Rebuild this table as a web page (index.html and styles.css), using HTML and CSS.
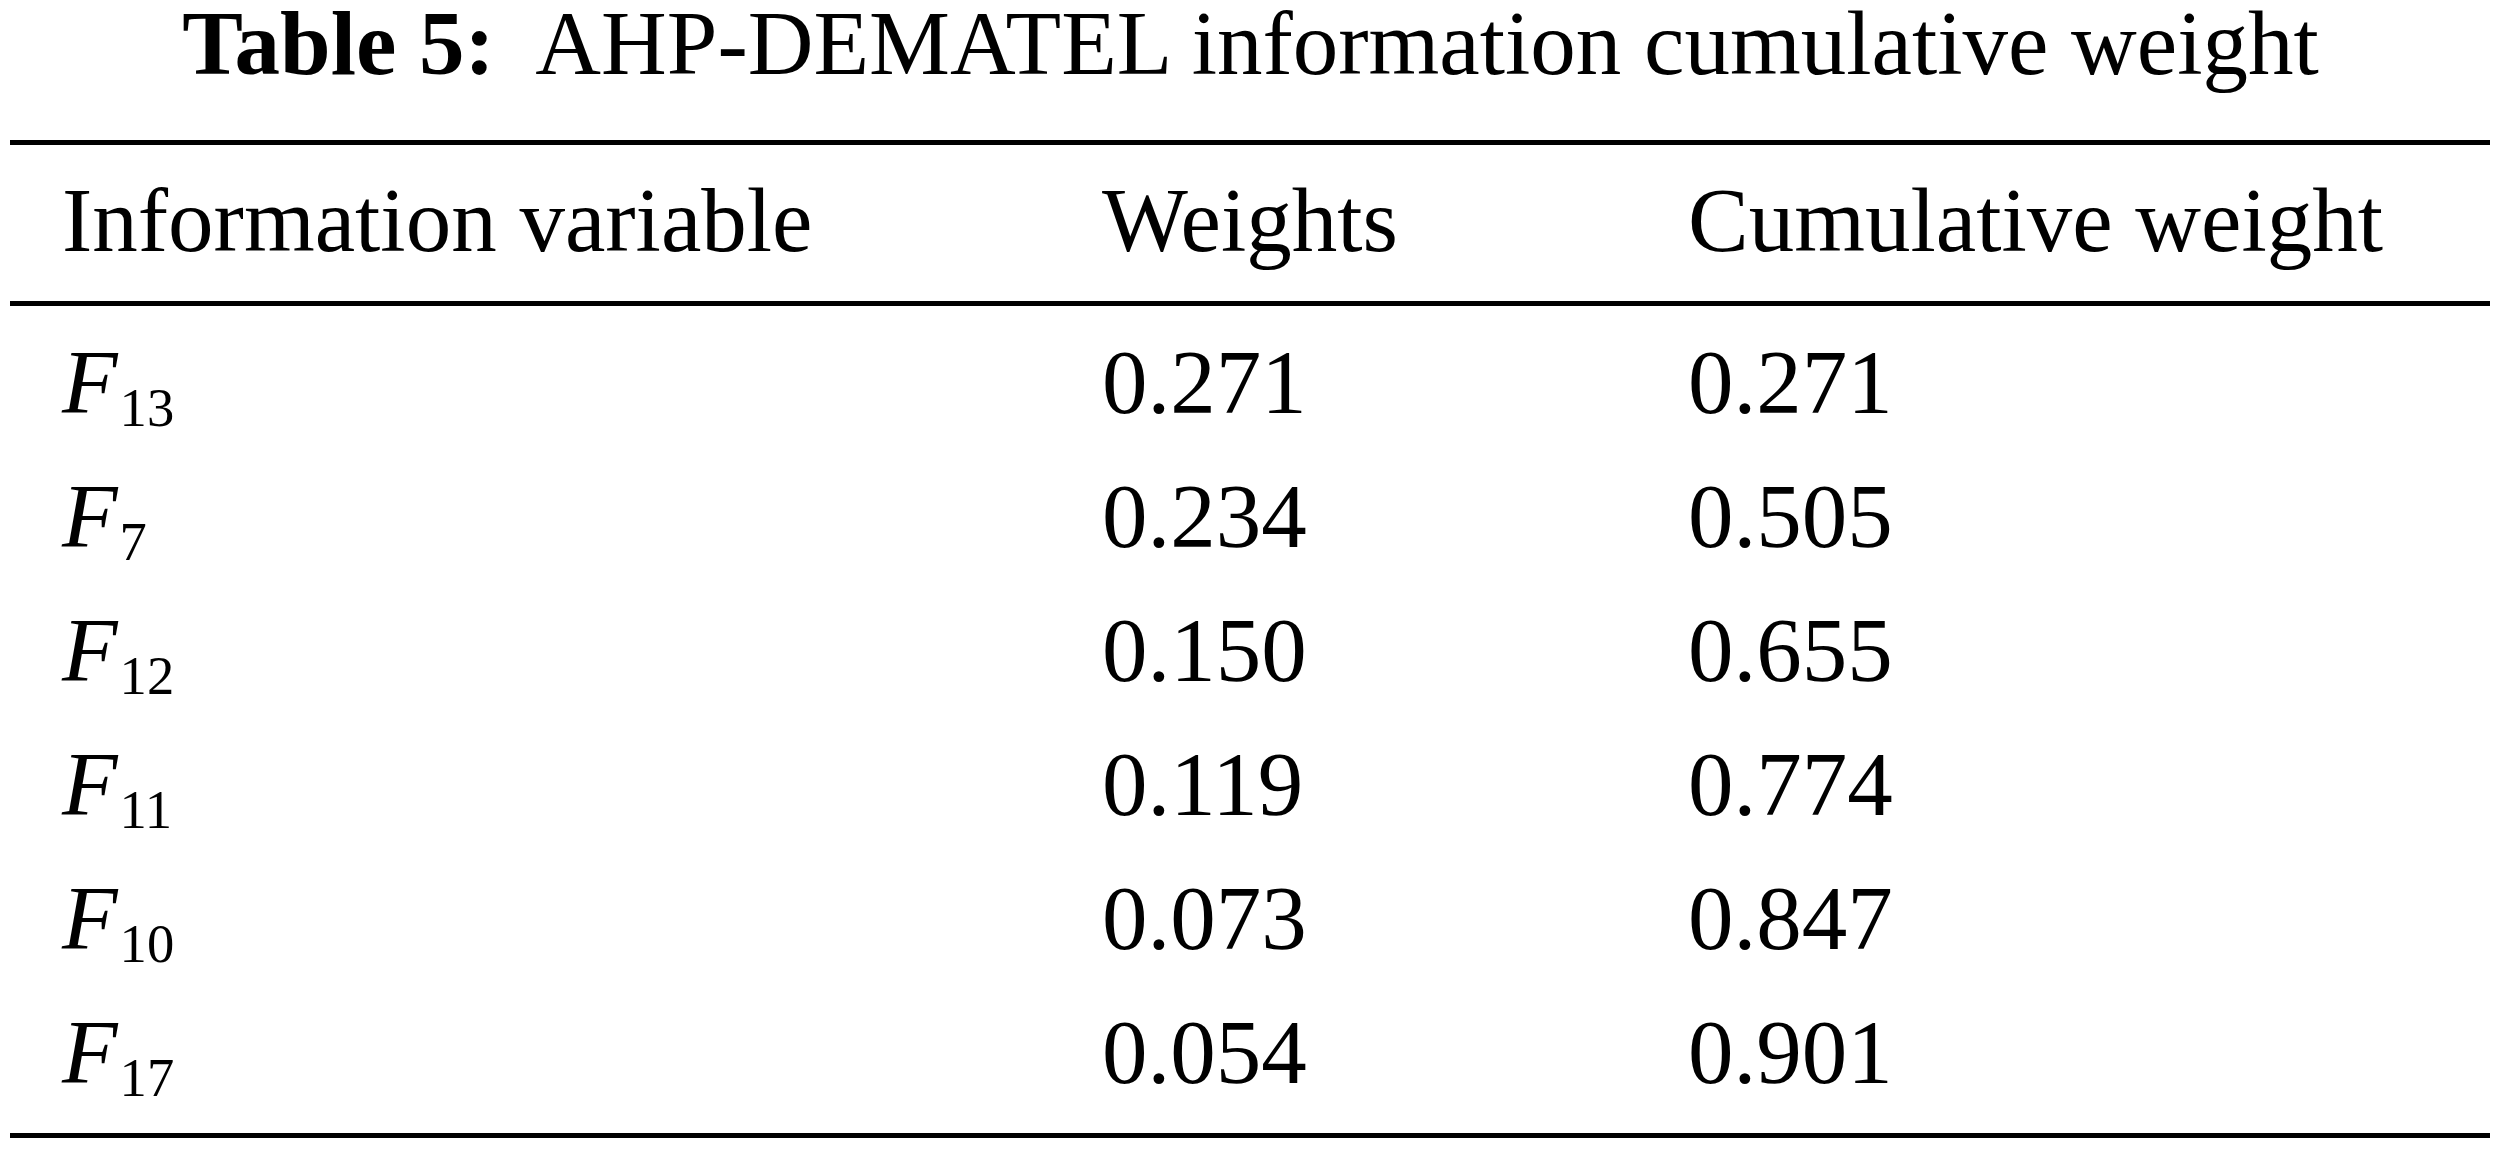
FILE: index.html
```html
<!DOCTYPE html>
<html>
<head>
<meta charset="utf-8">
<link rel="stylesheet" href="styles.css">
</head>
<body>
<div class="page">
  <h1 class="caption"><span class="label">Table 5:</span>&nbsp; AHP-DEMATEL information cumulative weight</h1>
  <table class="data">
    <colgroup>
      <col class="c1">
      <col class="c2">
      <col class="c3">
    </colgroup>
    <thead>
      <tr>
        <th>Information variable</th>
        <th>Weights</th>
        <th>Cumulative weight</th>
      </tr>
    </thead>
    <tbody>
      <tr><td><i>F</i><sub>13</sub></td><td>0.271</td><td>0.271</td></tr>
      <tr><td><i>F</i><sub>7</sub></td><td>0.234</td><td>0.505</td></tr>
      <tr><td><i>F</i><sub>12</sub></td><td>0.150</td><td>0.655</td></tr>
      <tr><td><i>F</i><sub>11</sub></td><td>0.119</td><td>0.774</td></tr>
      <tr><td><i>F</i><sub>10</sub></td><td>0.073</td><td>0.847</td></tr>
      <tr><td><i>F</i><sub>17</sub></td><td>0.054</td><td>0.901</td></tr>
    </tbody>
  </table>
</div>
</body>
</html>
```
FILE: styles.css
```css
html, body {
  margin: 0;
  padding: 0;
  background: #ffffff;
}
body {
  font-family: "Liberation Serif", "Times New Roman", serif;
  color: #000000;
  font-size: 91px;
}
.page {
  width: 2501px;
}
.caption {
  margin: 0 0 52px 0;
  font-size: 91px;
  font-weight: normal;
  line-height: 88px;
  text-align: center;
  white-space: nowrap;
}
.label {
  font-weight: bold;
}
.data {
  margin-left: 10px;
  width: 2480px;
  border-collapse: separate;
  border-spacing: 0;
  table-layout: fixed;
  border-top: 5px solid #000;
  border-bottom: 5px solid #000;
}
.c1 { width: 1092px; }
.c2 { width: 586px; }
.c3 { width: 802px; }
.data th,
.data td {
  text-align: left;
  font-weight: normal;
  line-height: 100px;
  padding: 27px 0 7px 0;
  white-space: nowrap;
}
.data th {
  padding: 26px 0 30px 0;
  border-bottom: 5px solid #000;
}
.data th:first-child,
.data td:first-child {
  padding-left: 52px;
}
.data tbody tr:last-child td {
  padding-bottom: 30px;
}
.data i {
  font-style: italic;
}
.data sub {
  font-size: 0.6em;
  line-height: 0;
  vertical-align: -13px;
  margin-left: 2px;
}
```
